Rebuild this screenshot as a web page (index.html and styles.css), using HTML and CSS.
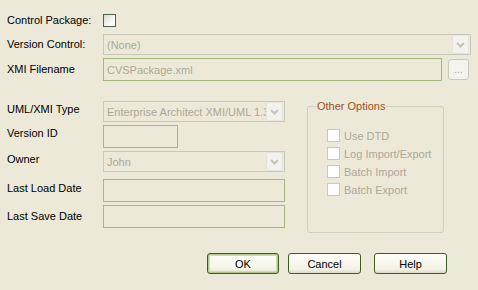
FILE: index.html
```html
<!DOCTYPE html>
<html lang="en">
<head>
<meta charset="UTF-8" />
<title>Package Control Options</title>
<link rel="stylesheet" href="styles.css">
</head>
<body>

<div class="dialog">

	<div class="row r-check">
		<span class="label">Control Package:</span>
		<span class="check"></span>
	</div>

	<div class="row r-combo r-vc">
		<span class="label">Version Control:</span>
		<div class="combo wide">
			<span class="value">(None)</span>
			<span class="drop"><svg width="9" height="6" viewBox="0 0 9 6"><path d="M1 1 L4.5 4.5 L8 1" fill="none" stroke="#c6c4b8" stroke-width="2"/></svg></span>
		</div>
	</div>

	<div class="row r-edit r-xmi">
		<span class="label">XMI Filename</span>
		<div class="edit file"><span class="value">CVSPackage.xml</span></div>
		<span class="dots">...</span>
	</div>

	<div class="lower">
		<div class="fields">
			<div class="row r-combo">
				<span class="label lift">UML/XMI Type</span>
				<div class="combo">
					<span class="value">Enterprise Architect XMI/UML 1.3</span>
					<span class="drop"><svg width="9" height="6" viewBox="0 0 9 6"><path d="M1 1 L4.5 4.5 L8 1" fill="none" stroke="#c6c4b8" stroke-width="2"/></svg></span>
				</div>
			</div>
			<div class="row r-edit">
				<span class="label lift2">Version ID</span>
				<div class="edit small"></div>
			</div>
			<div class="row r-combo">
				<span class="label lift">Owner</span>
				<div class="combo">
					<span class="value">John</span>
					<span class="drop"><svg width="9" height="6" viewBox="0 0 9 6"><path d="M1 1 L4.5 4.5 L8 1" fill="none" stroke="#c6c4b8" stroke-width="2"/></svg></span>
				</div>
			</div>
			<div class="row r-edit r-load">
				<span class="label lift">Last Load Date</span>
				<div class="edit"></div>
			</div>
			<div class="row r-edit">
				<span class="label">Last Save Date</span>
				<div class="edit"></div>
			</div>
		</div>

		<fieldset class="options">
			<legend>Other Options</legend>
			<div class="opt"><span class="check off"></span>Use DTD</div>
			<div class="opt"><span class="check off"></span>Log Import/Export</div>
			<div class="opt"><span class="check off"></span>Batch Import</div>
			<div class="opt"><span class="check off"></span>Batch Export</div>
		</fieldset>
	</div>

	<div class="buttons">
		<span class="btn default">OK</span>
		<span class="btn cancel">Cancel</span>
		<span class="btn help">Help</span>
	</div>

</div>

</body>
</html>
```

FILE: styles.css
```css
body
{
	margin: 0;
	font-family: "Liberation Sans", Arial, sans-serif;
	font-size: 11px;
	color: #000;
	background-color: #ece9d8;
}

.dialog
{
	width: 478px;
	height: 290px;
	padding: 14px 0 0 7px;
	box-sizing: border-box;
}

.row
{
	display: flex;
	align-items: center;
}

.label
{
	width: 96px;
	flex: none;
	line-height: 13px;
	white-space: nowrap;
}

.lift
{
	position: relative;
	top: -2px;
}

.lift2
{
	position: relative;
	top: -3px;
}

.r-check
{
	height: 13px;
}

.r-combo
{
	height: 21px;
}

.r-edit
{
	height: 23px;
}

.r-vc
{
	margin-top: 7px;
}

.r-xmi
{
	margin-top: 3px;
}

/* checkboxes */
.check
{
	display: inline-block;
	width: 11px;
	height: 11px;
	border: 1px solid #4d6148;
	background: linear-gradient(135deg, #dcdbd4 0%, #fafaf8 70%, #fff 100%);
}

.check.off
{
	border-color: #cac8bb;
	background: #fff;
	margin-right: 4px;
	flex: none;
}

/* disabled combo boxes */
.combo
{
	display: flex;
	align-items: center;
	width: 182px;
	height: 21px;
	box-sizing: border-box;
	border: 1px solid #c9c7ba;
	background-color: #ece9d8;
	color: #aca899;
	overflow: hidden;
}

.combo.wide
{
	width: 368px;
}

.combo .value
{
	flex: 1;
	padding-left: 3px;
	white-space: nowrap;
	overflow: hidden;
}

.drop
{
	display: flex;
	align-items: center;
	justify-content: center;
	flex: none;
	width: 15px;
	height: 17px;
	margin-right: 1px;
	border: 1px solid #e6e4da;
	border-radius: 2px;
	background-color: #f3f2ed;
}

/* read-only edit boxes */
.edit
{
	display: flex;
	align-items: center;
	width: 182px;
	height: 23px;
	box-sizing: border-box;
	border: 1px solid #a5b97f;
	color: #aca899;
}

.edit .value
{
	padding-left: 3px;
}

.edit.file
{
	width: 339px;
}

.edit.small
{
	width: 75px;
}

.dots
{
	display: flex;
	align-items: flex-end;
	justify-content: center;
	width: 21px;
	height: 21px;
	box-sizing: border-box;
	margin-left: 6px;
	padding-bottom: 4px;
	border: 1px solid #cac8bb;
	border-radius: 3px;
	background-color: #f4f3ee;
	color: #aca899;
	font-size: 10px;
	line-height: 10px;
}

/* lower part */
.lower
{
	display: flex;
	align-items: flex-start;
	margin-top: 20px;
}

.fields .row
{
	margin-bottom: 3px;
}

.fields .r-load
{
	margin-top: 7px;
}

.options
{
	width: 137px;
	height: 133px;
	box-sizing: border-box;
	margin: -1px 0 0 22px;
	padding: 16px 0 0 0;
	border: 1px solid #d0d0bf;
	border-radius: 3px;
}

.options legend
{
	margin-left: 8px;
	padding: 0 1px;
	line-height: 13px;
	color: #a0501e;
}

.opt
{
	display: flex;
	align-items: center;
	height: 13px;
	margin: 0 0 5px 19px;
	color: #aca899;
	white-space: nowrap;
}

/* buttons */
.buttons
{
	display: flex;
	margin: 20px 0 0 200px;
}

.btn
{
	display: flex;
	align-items: center;
	justify-content: center;
	width: 72px;
	height: 21px;
	box-sizing: border-box;
	border: 1px solid #3e5c22;
	border-radius: 3px;
	background: linear-gradient(#fefefa, #f4f2e6 80%, #dedbc9);
}

.btn.default
{
	box-shadow: inset 0 0 0 1px #b2c78a, inset 0 0 0 2px #d0dcb2;
}

.cancel
{
	width: 73px;
	margin-left: 9px;
}

.help
{
	width: 73px;
	margin-left: 13px;
}
```
